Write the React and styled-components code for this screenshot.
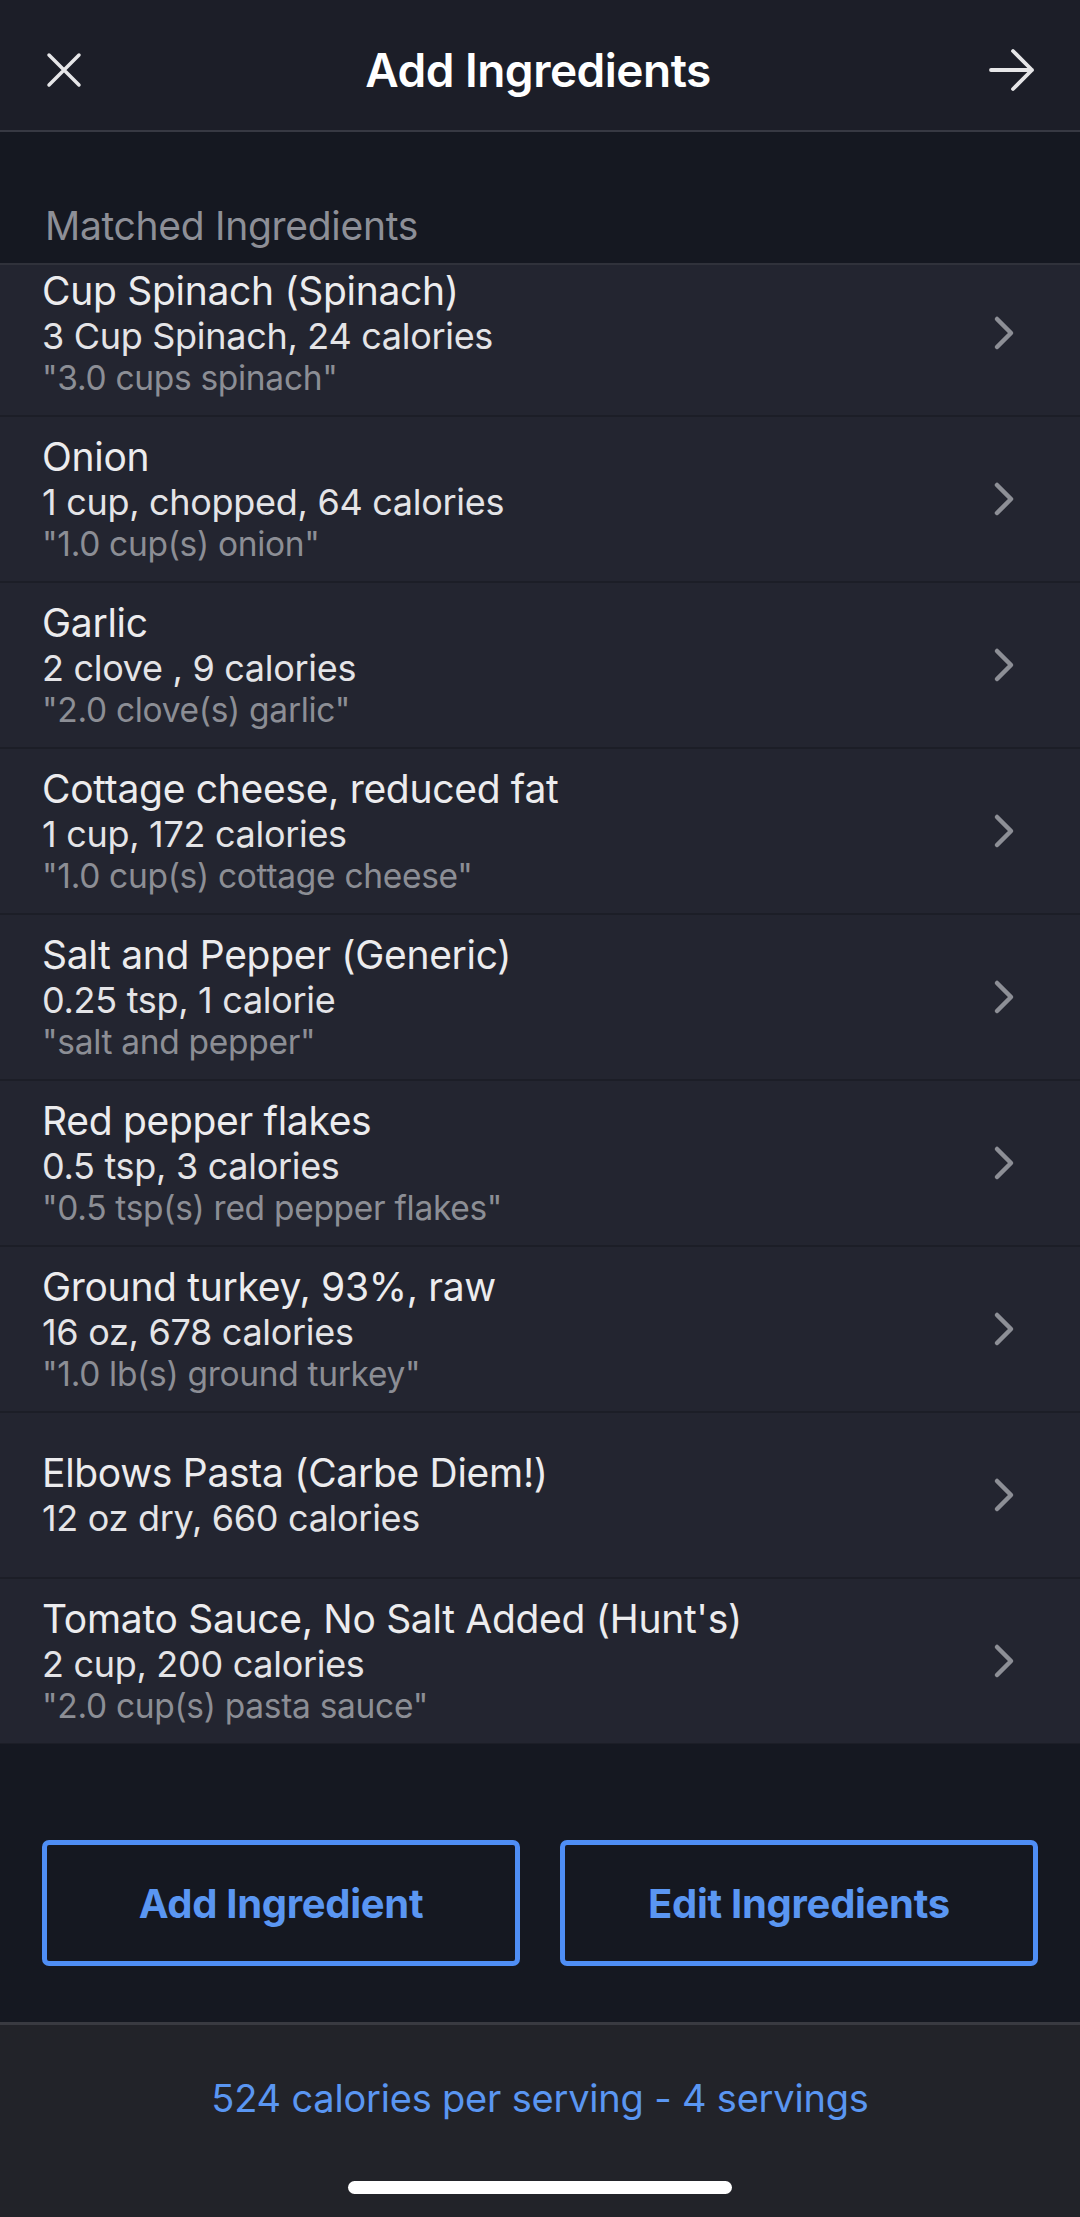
import React from "react";
import styled, { createGlobalStyle } from "styled-components";

const GlobalStyle = createGlobalStyle`
  html, body {
    margin: 0;
    padding: 0;
    background: #151821;
  }
  * {
    box-sizing: border-box;
  }
`;

const Screen = styled.div`
  width: 1080px;
  height: 2217px;
  display: flex;
  flex-direction: column;
  background: #151821;
  font-family: Inter, "Noto Sans", sans-serif;
  overflow: hidden;
`;

const NavBar = styled.div`
  height: 132px;
  flex-shrink: 0;
  display: flex;
  align-items: center;
  justify-content: space-between;
  padding: 10px 44px 0 40px;
  background: #1c1e28;
  border-bottom: 2px solid #373943;
`;

const NavTitle = styled.div`
  color: #ffffff;
  font-size: 46px;
  font-weight: 600;
  letter-spacing: -0.5px;
`;

const IconButton = styled.div`
  width: 48px;
  height: 48px;
  display: flex;
  align-items: center;
  justify-content: center;
`;

const SectionHeader = styled.div`
  height: 131px;
  flex-shrink: 0;
  display: flex;
  align-items: flex-end;
  padding: 0 45px 14px;
  color: #8d8f97;
  font-size: 39px;
  letter-spacing: -0.3px;
`;

const ScrollArea = styled.div`
  flex-shrink: 0;
  height: 1481px;
  overflow: hidden;
  border-top: 2px solid #30323b;
`;

const List = styled.div`
  margin-top: -14px;
`;

const Row = styled.div`
  height: 166px;
  display: flex;
  align-items: center;
  justify-content: space-between;
  padding: 0 65px 0 42px;
  background: #232530;
  border-bottom: 2px solid #1c1e27;
`;

const RowText = styled.div`
  display: flex;
  flex-direction: column;
  letter-spacing: -0.3px;
`;

const Name = styled.div`
  color: #ececee;
  font-size: 39px;
  line-height: 46px;
`;

const Detail = styled.div`
  color: #e4e4e7;
  font-size: 36px;
  line-height: 44px;
`;

const Quote = styled.div`
  color: #8c8e95;
  font-size: 33.5px;
  line-height: 41px;
`;

const Actions = styled.div`
  flex: 1;
  display: flex;
  align-items: flex-start;
  gap: 40px;
  padding: 96px 42px 0;
`;

const OutlineButton = styled.div`
  flex: 1;
  height: 126px;
  display: flex;
  align-items: center;
  justify-content: center;
  border: 5px solid #4f8ef5;
  border-radius: 7px;
  color: #5a96f2;
  font-size: 40px;
  font-weight: 700;
  letter-spacing: -0.3px;
`;

const Footer = styled.div`
  height: 195px;
  flex-shrink: 0;
  display: flex;
  flex-direction: column;
  align-items: center;
  background: #222329;
  border-top: 3px solid #393a41;
`;

const Summary = styled.div`
  margin-top: 50px;
  color: #5a96f2;
  font-size: 38px;
  letter-spacing: -0.2px;
`;

const HomeIndicator = styled.div`
  margin-top: 60px;
  width: 384px;
  height: 13px;
  border-radius: 7px;
  background: #ffffff;
`;

const CloseIcon = () => (
  <svg width="36" height="36" viewBox="0 0 36 36">
    <path d="M3 3 L33 33 M33 3 L3 33" stroke="#e6e6e8" strokeWidth="3.5" strokeLinecap="round" />
  </svg>
);

const ArrowIcon = () => (
  <svg width="48" height="46" viewBox="0 0 48 46">
    <path
      d="M3 23 H44 M25 4 L44 23 L25 42"
      stroke="#e6e6e8"
      strokeWidth="3.8"
      fill="none"
      strokeLinecap="round"
      strokeLinejoin="round"
    />
  </svg>
);

const Chevron = () => (
  <svg width="22" height="36" viewBox="0 0 22 36">
    <path
      d="M4 4 L18 18 L4 32"
      stroke="#8d8f96"
      strokeWidth="4.5"
      fill="none"
      strokeLinecap="round"
      strokeLinejoin="round"
    />
  </svg>
);

const ingredients = [
  { name: "Cup Spinach (Spinach)", detail: "3 Cup Spinach, 24 calories", quote: '"3.0 cups spinach"' },
  { name: "Onion", detail: "1 cup, chopped, 64 calories", quote: '"1.0 cup(s) onion"' },
  { name: "Garlic", detail: "2 clove , 9 calories", quote: '"2.0 clove(s) garlic"' },
  { name: "Cottage cheese, reduced fat", detail: "1 cup, 172 calories", quote: '"1.0 cup(s) cottage cheese"' },
  { name: "Salt and Pepper (Generic)", detail: "0.25 tsp, 1 calorie", quote: '"salt and pepper"' },
  { name: "Red pepper flakes", detail: "0.5 tsp, 3 calories", quote: '"0.5 tsp(s) red pepper flakes"' },
  { name: "Ground turkey, 93%, raw", detail: "16 oz, 678 calories", quote: '"1.0 lb(s) ground turkey"' },
  { name: "Elbows Pasta (Carbe Diem!)", detail: "12 oz dry, 660 calories" },
  { name: "Tomato Sauce, No Salt Added (Hunt's)", detail: "2 cup, 200 calories", quote: '"2.0 cup(s) pasta sauce"' },
];

const App = () => {
  return (
    <Screen>
      <GlobalStyle />
      <NavBar>
        <IconButton>
          <CloseIcon />
        </IconButton>
        <NavTitle>Add Ingredients</NavTitle>
        <IconButton>
          <ArrowIcon />
        </IconButton>
      </NavBar>
      <SectionHeader>Matched Ingredients</SectionHeader>
      <ScrollArea>
        <List>
          {ingredients.map((item) => (
            <Row key={item.name}>
              <RowText>
                <Name>{item.name}</Name>
                <Detail>{item.detail}</Detail>
                {item.quote && <Quote>{item.quote}</Quote>}
              </RowText>
              <Chevron />
            </Row>
          ))}
        </List>
      </ScrollArea>
      <Actions>
        <OutlineButton>Add Ingredient</OutlineButton>
        <OutlineButton>Edit Ingredients</OutlineButton>
      </Actions>
      <Footer>
        <Summary>524 calories per serving - 4 servings</Summary>
        <HomeIndicator />
      </Footer>
    </Screen>
  );
};

export default App;
